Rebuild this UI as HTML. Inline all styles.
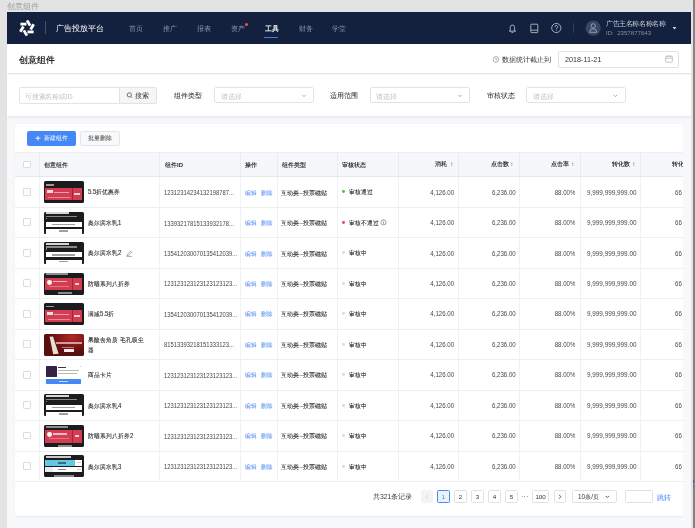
<!DOCTYPE html><html><head><meta charset="utf-8"><style>
*{box-sizing:border-box;margin:0;padding:0}
body{width:695px;height:528px;overflow:hidden;background:#e3e3e3;position:relative;font-family:"Liberation Sans",sans-serif;color:#333}
.ab{position:absolute}
.t{position:absolute;white-space:nowrap;line-height:1;transform:scale(0.1);transform-origin:0 0;will-change:transform}
svg{position:absolute;overflow:visible;left:0;top:0}
</style></head><body>
<div class="t" style="left:7.00px;top:1.50px;font-size:80.0px;color:#a0a0a0;font-weight:normal;">创意组件</div>
<div class="ab" style="left:692.80px;top:0.00px;width:2.20px;height:528.00px;background:#848484"></div>
<div class="ab" style="left:7.00px;top:12.00px;width:684.00px;height:516.00px;background:#f7f8fa"></div>
<div class="ab" style="left:7.00px;top:12.00px;width:684.00px;height:31.60px;background:#13213f"></div>
<svg style="left:27.3px;top:28.4px" width="1" height="1"><rect x="-6.6" y="-5.3" width="6.1" height="2.8" transform="rotate(0)" fill="#fff"/><rect x="-6.6" y="-5.3" width="6.1" height="2.8" transform="rotate(60)" fill="#fff"/><rect x="-6.6" y="-5.3" width="6.1" height="2.8" transform="rotate(120)" fill="#fff"/><rect x="-6.6" y="-5.3" width="6.1" height="2.8" transform="rotate(180)" fill="#fff"/><rect x="-6.6" y="-5.3" width="6.1" height="2.8" transform="rotate(240)" fill="#fff"/><rect x="-6.6" y="-5.3" width="6.1" height="2.8" transform="rotate(300)" fill="#fff"/></svg>
<div class="ab" style="left:45.20px;top:21.00px;width:0.60px;height:13.00px;background:rgba(255,255,255,0.22)"></div>
<div class="t" style="left:55.50px;top:24.00px;font-size:80.0px;color:#ffffff;font-weight:500;">广告投放平台</div>
<div class="t" style="left:128.60px;top:25.00px;font-size:67.0px;color:#8a93a6;font-weight:normal;">首页</div>
<div class="t" style="left:163.20px;top:25.00px;font-size:67.0px;color:#8a93a6;font-weight:normal;">推广</div>
<div class="t" style="left:197.00px;top:25.00px;font-size:67.0px;color:#8a93a6;font-weight:normal;">报表</div>
<div class="t" style="left:230.70px;top:25.00px;font-size:67.0px;color:#8a93a6;font-weight:normal;">资产</div>
<div class="t" style="left:264.60px;top:25.00px;font-size:66.0px;color:#ffffff;font-weight:bold;">工具</div>
<div class="t" style="left:298.50px;top:25.00px;font-size:67.0px;color:#8a93a6;font-weight:normal;">财务</div>
<div class="t" style="left:332.40px;top:25.00px;font-size:67.0px;color:#8a93a6;font-weight:normal;">学堂</div>
<div class="ab" style="left:264.00px;top:36.50px;width:14.00px;height:1.80px;background:#3b7ff3;border-radius:1px"></div>
<div class="ab" style="left:244.70px;top:23.10px;width:3.40px;height:3.40px;background:#f0574c;border-radius:50%"></div>
<svg style="left:0px;top:0px" width="695" height="528"><g fill="none" stroke="#c5cad4" stroke-width="0.8">
<path d="M509 31.2 h7 M510.2 31.2 v-3.6 a2.2 2.6 0 0 1 4.4 0 v3.6 M511.4 32.4 h2"/>
<rect x="530.8" y="24.2" width="7" height="8.4" rx="0.8"/>
<path d="M530.8 30.2 h7"/>
<circle cx="556.3" cy="28" r="4.6"/>
<path d="M554.9 26.9 a1.4 1.4 0 1 1 1.9 1.3 c-0.4 0.2 -0.5 0.4 -0.5 0.9 v0.4"/>
</g>
<circle cx="556.3" cy="30.8" r="0.45" fill="#c5cad4"/>
<rect x="573.1" y="23" width="0.6" height="10" fill="rgba(255,255,255,0.22)"/>
<circle cx="593.2" cy="28.2" r="7.6" fill="#3a4661"/>
<g fill="none" stroke="#c3c8d1" stroke-width="0.65">
<circle cx="593.2" cy="25.9" r="2.2"/>
<path d="M589.6 32.3 a3.6 3.5 0 0 1 7.2 0 z"/>
</g>
<path d="M672.6 27.0 h3.8 l-1.9 2.6 z" fill="#d5d9e0"/></svg>
<div class="t" style="left:606.00px;top:19.60px;font-size:66.0px;color:#c9cdd5;font-weight:normal;">广告主名称名称名称</div>
<div class="t" style="left:606.00px;top:30.20px;font-size:61.0px;color:#858ea2;font-weight:normal;">ID:&nbsp;&nbsp;2357877643</div>
<div class="ab" style="left:7.00px;top:43.60px;width:684.00px;height:30.40px;background:#fff;border-bottom:0.8px solid #e6e7ea"></div>
<div class="t" style="left:18.90px;top:54.60px;font-size:89.0px;color:#222;font-weight:bold;">创意组件</div>
<svg style="left:0px;top:0px" width="695" height="528"><g fill="none" stroke="#8a8a8a" stroke-width="0.7">
<circle cx="495.9" cy="59.4" r="2.8"/>
<path d="M495.9 57.9 v1.7 h1.1"/>
</g></svg>
<div class="t" style="left:501.70px;top:55.60px;font-size:70.0px;color:#333;font-weight:normal;">数据统计截止到</div>
<div class="ab" style="left:558.30px;top:50.50px;width:120.30px;height:17.00px;background:#fff;border:0.7px solid #dfe1e5;border-radius:2px"></div>
<div class="t" style="left:565.10px;top:55.80px;font-size:76.0px;color:#333;font-weight:normal;transform:scale(0.0950,0.1);">2018-11-21</div>
<svg style="left:0px;top:0px" width="695" height="528"><g fill="none" stroke="#aaa" stroke-width="0.7">
<rect x="665.7" y="56.2" width="6.6" height="6" rx="0.6"/>
<path d="M665.7 58.2 h6.6 M667.6 55.4 v1.6 M670.4 55.4 v1.6"/>
</g></svg>
<div class="ab" style="left:7.00px;top:74.60px;width:684.00px;height:41.20px;background:#fff;box-shadow:0 1.5px 2px rgba(30,40,90,0.06)"></div>
<div class="ab" style="left:18.90px;top:87.30px;width:101.00px;height:16.70px;background:#fff;border:0.7px solid #e1e3e7;border-radius:2px 0 0 2px"></div>
<div class="t" style="left:25.30px;top:92.80px;font-size:68.0px;color:#bfc2c7;font-weight:normal;">可搜索名称或ID</div>
<div class="ab" style="left:118.90px;top:87.30px;width:38.60px;height:16.70px;background:#f5f6f8;border:0.7px solid #e1e3e7;border-radius:0 2px 2px 0"></div>
<svg style="left:0px;top:0px" width="695" height="528"><g fill="none" stroke="#444" stroke-width="0.75">
<circle cx="129.3" cy="94.9" r="2.1"/>
<path d="M130.8 96.4 l1.3 1.3"/>
</g></svg>
<div class="t" style="left:134.60px;top:92.20px;font-size:73.0px;color:#333;font-weight:normal;">搜索</div>
<div class="t" style="left:173.90px;top:92.00px;font-size:70.0px;color:#1f1f1f;font-weight:normal;">组件类型</div>
<div class="ab" style="left:214.00px;top:87.20px;width:99.70px;height:16.30px;background:#fff;border:0.7px solid #e1e3e7;border-radius:2px"></div>
<div class="t" style="left:220.50px;top:92.60px;font-size:68.0px;color:#bfc2c7;font-weight:normal;">请选择</div>
<svg style="left:0px;top:0px" width="695" height="528"><path d="M302.3 94.9 l1.7 1.7 l1.7 -1.7" fill="none" stroke="#888" stroke-width="0.7"/></svg>
<div class="t" style="left:330.40px;top:92.00px;font-size:70.0px;color:#1f1f1f;font-weight:normal;">适用范围</div>
<div class="ab" style="left:369.60px;top:87.20px;width:100.30px;height:16.30px;background:#fff;border:0.7px solid #e1e3e7;border-radius:2px"></div>
<div class="t" style="left:376.10px;top:92.60px;font-size:68.0px;color:#bfc2c7;font-weight:normal;">请选择</div>
<svg style="left:0px;top:0px" width="695" height="528"><path d="M458.3 94.9 l1.7 1.7 l1.7 -1.7" fill="none" stroke="#888" stroke-width="0.7"/></svg>
<div class="t" style="left:486.80px;top:92.00px;font-size:70.0px;color:#1f1f1f;font-weight:normal;">审核状态</div>
<div class="ab" style="left:526.30px;top:87.20px;width:99.70px;height:16.30px;background:#fff;border:0.7px solid #e1e3e7;border-radius:2px"></div>
<div class="t" style="left:532.80px;top:92.60px;font-size:68.0px;color:#bfc2c7;font-weight:normal;">请选择</div>
<svg style="left:0px;top:0px" width="695" height="528"><path d="M613.6999999999999 94.9 l1.7 1.7 l1.7 -1.7" fill="none" stroke="#888" stroke-width="0.7"/></svg>
<div class="ab" style="left:15.00px;top:124.00px;width:668.00px;height:392.20px;background:#fff;border-radius:2px;box-shadow:0 0.5px 2px rgba(0,0,0,0.06)"></div>
<div class="ab" style="left:26.90px;top:131.00px;width:49.00px;height:14.60px;background:#4487f6;border-radius:2px"></div>
<svg style="left:0px;top:0px" width="695" height="528"><path d="M35.6 138.2 h4.7 M37.95 135.85 v4.7" stroke="#fff" stroke-width="0.9"/></svg>
<div class="t" style="left:43.90px;top:134.90px;font-size:61.0px;color:#fff;font-weight:normal;">新建组件</div>
<div class="ab" style="left:80.20px;top:131.00px;width:39.60px;height:14.60px;background:#f8f9fa;border:0.7px solid #e4e6ea;border-radius:2px"></div>
<div class="t" style="left:88.10px;top:134.90px;font-size:61.0px;color:#333;font-weight:normal;">批量删除</div>
<div class="ab" style="left:15.00px;top:152.20px;width:668.00px;height:24.40px;background:#f5f7fa;border-top:0.6px solid #eceef2"></div>
<div class="ab" style="left:15.00px;top:176.20px;width:668.00px;height:0.80px;background:#e6e9ee"></div>
<div class="ab" style="left:39.05px;top:152.20px;width:0.70px;height:24.20px;background:#e9ebef"></div>
<div class="ab" style="left:159.45px;top:152.20px;width:0.70px;height:24.20px;background:#e9ebef"></div>
<div class="ab" style="left:240.05px;top:152.20px;width:0.70px;height:24.20px;background:#e9ebef"></div>
<div class="ab" style="left:276.65px;top:152.20px;width:0.70px;height:24.20px;background:#e9ebef"></div>
<div class="ab" style="left:337.25px;top:152.20px;width:0.70px;height:24.20px;background:#e9ebef"></div>
<div class="ab" style="left:398.05px;top:152.20px;width:0.70px;height:24.20px;background:#e9ebef"></div>
<div class="ab" style="left:458.25px;top:152.20px;width:0.70px;height:24.20px;background:#e9ebef"></div>
<div class="ab" style="left:519.05px;top:152.20px;width:0.70px;height:24.20px;background:#e9ebef"></div>
<div class="ab" style="left:579.55px;top:152.20px;width:0.70px;height:24.20px;background:#e9ebef"></div>
<div class="ab" style="left:640.15px;top:152.20px;width:0.70px;height:24.20px;background:#e9ebef"></div>
<div class="ab" style="left:23.20px;top:160.60px;width:7.80px;height:7.80px;background:#fff;border:0.7px solid #d9dce1;border-radius:1px"></div>
<div class="t" style="left:43.80px;top:161.60px;font-size:60.0px;color:#2a2a2a;font-weight:bold;">创意组件</div>
<div class="t" style="left:164.80px;top:161.60px;font-size:60.0px;color:#2a2a2a;font-weight:bold;">组件ID</div>
<div class="t" style="left:244.90px;top:161.60px;font-size:60.0px;color:#2a2a2a;font-weight:bold;">操作</div>
<div class="t" style="left:281.70px;top:161.60px;font-size:60.0px;color:#2a2a2a;font-weight:bold;">组件类型</div>
<div class="t" style="left:342.30px;top:161.80px;font-size:60.0px;color:#2a2a2a;font-weight:bold;">审核状态</div>
<div class="t" style="left:398.40px;top:160.60px;font-size:60.0px;color:#2a2a2a;font-weight:bold;width:494.0px;text-align:right;">消耗</div>
<svg style="left:450.6px;top:161.6px" width="2" height="5"><path d="M0 1.9 L0.8 0.3 L1.6 1.9 z M0 2.7 L0.8 4.3 L1.6 2.7 z" fill="#8e939b"/></svg>
<div class="t" style="left:458.60px;top:160.60px;font-size:60.0px;color:#2a2a2a;font-weight:bold;width:500.0px;text-align:right;">点击数</div>
<svg style="left:511.4px;top:161.6px" width="2" height="5"><path d="M0 1.9 L0.8 0.3 L1.6 1.9 z M0 2.7 L0.8 4.3 L1.6 2.7 z" fill="#8e939b"/></svg>
<div class="t" style="left:519.40px;top:160.60px;font-size:60.0px;color:#2a2a2a;font-weight:bold;width:497.0px;text-align:right;">点击率</div>
<svg style="left:571.9px;top:161.6px" width="2" height="5"><path d="M0 1.9 L0.8 0.3 L1.6 1.9 z M0 2.7 L0.8 4.3 L1.6 2.7 z" fill="#8e939b"/></svg>
<div class="t" style="left:579.90px;top:160.60px;font-size:60.0px;color:#2a2a2a;font-weight:bold;width:498.0px;text-align:right;">转化数</div>
<svg style="left:632.5px;top:161.6px" width="2" height="5"><path d="M0 1.9 L0.8 0.3 L1.6 1.9 z M0 2.7 L0.8 4.3 L1.6 2.7 z" fill="#8e939b"/></svg>
<div class="t" style="left:671.60px;top:160.60px;font-size:60.0px;color:#2a2a2a;font-weight:bold;">转化</div>
<div class="ab" style="left:15.00px;top:206.68px;width:668.00px;height:0.80px;background:#eceef1"></div>
<div class="ab" style="left:39.05px;top:176.60px;width:0.70px;height:30.48px;background:#eff1f4"></div>
<div class="ab" style="left:159.45px;top:176.60px;width:0.70px;height:30.48px;background:#eff1f4"></div>
<div class="ab" style="left:240.05px;top:176.60px;width:0.70px;height:30.48px;background:#eff1f4"></div>
<div class="ab" style="left:276.65px;top:176.60px;width:0.70px;height:30.48px;background:#eff1f4"></div>
<div class="ab" style="left:337.25px;top:176.60px;width:0.70px;height:30.48px;background:#eff1f4"></div>
<div class="ab" style="left:398.05px;top:176.60px;width:0.70px;height:30.48px;background:#eff1f4"></div>
<div class="ab" style="left:458.25px;top:176.60px;width:0.70px;height:30.48px;background:#eff1f4"></div>
<div class="ab" style="left:519.05px;top:176.60px;width:0.70px;height:30.48px;background:#eff1f4"></div>
<div class="ab" style="left:579.55px;top:176.60px;width:0.70px;height:30.48px;background:#eff1f4"></div>
<div class="ab" style="left:640.15px;top:176.60px;width:0.70px;height:30.48px;background:#eff1f4"></div>
<div class="ab" style="left:23.20px;top:187.84px;width:7.80px;height:7.80px;background:#fff;border:0.7px solid #d9dce1;border-radius:1px"></div>
<div class="ab" style="left:43.60px;top:181.10px;width:40.00px;height:21.60px;background:#1c1c1e;border-radius:1.6px"></div>
<div class="ab" style="left:45.90px;top:184.00px;width:8.40px;height:1.50px;background:#9a9a9a"></div>
<div class="ab" style="left:45.20px;top:187.70px;width:36.90px;height:12.30px;background:#d43c51"></div>
<div class="ab" style="left:72.00px;top:187.70px;width:0.50px;height:12.30px;background:#9a2a3a"></div>
<div class="ab" style="left:47.20px;top:190.10px;width:5.80px;height:2.90px;background:#f6dfe3"></div>
<div class="ab" style="left:53.60px;top:191.70px;width:15.60px;height:1.20px;background:#eaa0ab"></div>
<div class="ab" style="left:47.50px;top:197.20px;width:22.30px;height:0.70px;background:#e68a98"></div>
<div class="ab" style="left:74.30px;top:193.10px;width:5.50px;height:1.60px;background:#f3cdd3"></div>
<div class="t" style="left:87.90px;top:189.34px;font-size:64.0px;color:#2b2b2b;font-weight:normal;transform:scale(0.0940,0.1);-webkit-text-stroke:1.0px #2b2b2b;">5.5折优惠券</div>
<div class="t" style="left:164.00px;top:189.04px;font-size:65.0px;color:#474747;font-weight:normal;transform:scale(0.0900,0.1);">12312314234132198787...</div>
<div class="t" style="left:244.80px;top:189.54px;font-size:63.0px;color:#3f80f2;font-weight:normal;transform:scale(0.0940,0.1);">编辑</div>
<div class="t" style="left:261.00px;top:189.54px;font-size:63.0px;color:#3f80f2;font-weight:normal;transform:scale(0.0940,0.1);">删除</div>
<div class="t" style="left:281.40px;top:189.54px;font-size:62.0px;color:#2b2b2b;font-weight:normal;transform:scale(0.0990,0.1);-webkit-text-stroke:0.8px #2b2b2b;">互动类–投票磁贴</div>
<div class="ab" style="left:342.40px;top:190.44px;width:2.80px;height:2.80px;background:#5cbf3a;border-radius:50%"></div>
<div class="t" style="left:348.50px;top:189.44px;font-size:64.0px;color:#2b2b2b;font-weight:normal;transform:scale(0.0950,0.1);-webkit-text-stroke:0.8px #2b2b2b;">审核通过</div>
<div class="t" style="left:398.40px;top:188.54px;font-size:67.0px;color:#474747;font-weight:normal;width:616.5px;text-align:right;transform:scale(0.0910,0.1);">4,126.00</div>
<div class="t" style="left:458.60px;top:188.54px;font-size:67.0px;color:#474747;font-weight:normal;width:623.1px;text-align:right;transform:scale(0.0910,0.1);">6,236.00</div>
<div class="t" style="left:519.40px;top:188.54px;font-size:67.0px;color:#474747;font-weight:normal;width:619.8px;text-align:right;transform:scale(0.0910,0.1);">88.00%</div>
<div class="t" style="left:579.90px;top:188.54px;font-size:67.0px;color:#474747;font-weight:normal;width:594.7px;text-align:right;transform:scale(0.0950,0.1);">9,999,999,999.00</div>
<div class="t" style="left:674.90px;top:188.54px;font-size:67.0px;color:#474747;font-weight:normal;transform:scale(0.0910,0.1);">66</div>
<div class="ab" style="left:15.00px;top:237.16px;width:668.00px;height:0.80px;background:#eceef1"></div>
<div class="ab" style="left:39.05px;top:207.08px;width:0.70px;height:30.48px;background:#eff1f4"></div>
<div class="ab" style="left:159.45px;top:207.08px;width:0.70px;height:30.48px;background:#eff1f4"></div>
<div class="ab" style="left:240.05px;top:207.08px;width:0.70px;height:30.48px;background:#eff1f4"></div>
<div class="ab" style="left:276.65px;top:207.08px;width:0.70px;height:30.48px;background:#eff1f4"></div>
<div class="ab" style="left:337.25px;top:207.08px;width:0.70px;height:30.48px;background:#eff1f4"></div>
<div class="ab" style="left:398.05px;top:207.08px;width:0.70px;height:30.48px;background:#eff1f4"></div>
<div class="ab" style="left:458.25px;top:207.08px;width:0.70px;height:30.48px;background:#eff1f4"></div>
<div class="ab" style="left:519.05px;top:207.08px;width:0.70px;height:30.48px;background:#eff1f4"></div>
<div class="ab" style="left:579.55px;top:207.08px;width:0.70px;height:30.48px;background:#eff1f4"></div>
<div class="ab" style="left:640.15px;top:207.08px;width:0.70px;height:30.48px;background:#eff1f4"></div>
<div class="ab" style="left:23.20px;top:218.32px;width:7.80px;height:7.80px;background:#fff;border:0.7px solid #d9dce1;border-radius:1px"></div>
<div class="ab" style="left:43.80px;top:211.58px;width:40.10px;height:22.00px;background:#1f1d1c;border-radius:1.6px 1.6px 1px 1px"></div>
<div class="ab" style="left:46.10px;top:212.28px;width:23.00px;height:1.80px;background:#d6d6d6"></div>
<div class="ab" style="left:46.10px;top:215.88px;width:31.40px;height:1.30px;background:#8a8a8a"></div>
<div class="ab" style="left:46.10px;top:217.98px;width:1.40px;height:1.30px;background:#8a8a8a"></div>
<div class="ab" style="left:45.70px;top:221.98px;width:36.60px;height:5.00px;background:#fff"></div>
<div class="ab" style="left:51.60px;top:223.88px;width:23.30px;height:1.30px;background:#a0a0a0"></div>
<div class="ab" style="left:46.10px;top:229.08px;width:36.20px;height:4.50px;background:#fff"></div>
<div class="ab" style="left:59.30px;top:230.38px;width:8.50px;height:1.30px;background:#a0a0a0"></div>
<div class="t" style="left:87.90px;top:219.82px;font-size:64.0px;color:#2b2b2b;font-weight:normal;transform:scale(0.0940,0.1);-webkit-text-stroke:1.0px #2b2b2b;">奥尔滨水乳1</div>
<div class="t" style="left:164.00px;top:219.52px;font-size:65.0px;color:#474747;font-weight:normal;transform:scale(0.0900,0.1);">13393217815133932178...</div>
<div class="t" style="left:244.80px;top:220.02px;font-size:63.0px;color:#3f80f2;font-weight:normal;transform:scale(0.0940,0.1);">编辑</div>
<div class="t" style="left:261.00px;top:220.02px;font-size:63.0px;color:#3f80f2;font-weight:normal;transform:scale(0.0940,0.1);">删除</div>
<div class="t" style="left:281.40px;top:220.02px;font-size:62.0px;color:#2b2b2b;font-weight:normal;transform:scale(0.0990,0.1);-webkit-text-stroke:0.8px #2b2b2b;">互动类–投票磁贴</div>
<div class="ab" style="left:342.40px;top:220.92px;width:2.80px;height:2.80px;background:#ea4b5b;border-radius:50%"></div>
<div class="t" style="left:348.50px;top:219.92px;font-size:64.0px;color:#2b2b2b;font-weight:normal;transform:scale(0.0950,0.1);-webkit-text-stroke:0.8px #2b2b2b;">审核不通过</div>
<svg style="left:0px;top:0px" width="695" height="528"><circle cx="383.5" cy="222.32" r="2.6" fill="none" stroke="#666" stroke-width="0.65"/><path d="M383.5 221.82 v2" stroke="#666" stroke-width="0.65"/><circle cx="383.5" cy="220.92" r="0.4" fill="#666"/></svg>
<div class="t" style="left:398.40px;top:219.02px;font-size:67.0px;color:#474747;font-weight:normal;width:616.5px;text-align:right;transform:scale(0.0910,0.1);">4,126.00</div>
<div class="t" style="left:458.60px;top:219.02px;font-size:67.0px;color:#474747;font-weight:normal;width:623.1px;text-align:right;transform:scale(0.0910,0.1);">6,236.00</div>
<div class="t" style="left:519.40px;top:219.02px;font-size:67.0px;color:#474747;font-weight:normal;width:619.8px;text-align:right;transform:scale(0.0910,0.1);">88.00%</div>
<div class="t" style="left:579.90px;top:219.02px;font-size:67.0px;color:#474747;font-weight:normal;width:594.7px;text-align:right;transform:scale(0.0950,0.1);">9,999,999,999.00</div>
<div class="t" style="left:674.90px;top:219.02px;font-size:67.0px;color:#474747;font-weight:normal;transform:scale(0.0910,0.1);">66</div>
<div class="ab" style="left:15.00px;top:267.64px;width:668.00px;height:0.80px;background:#eceef1"></div>
<div class="ab" style="left:39.05px;top:237.56px;width:0.70px;height:30.48px;background:#eff1f4"></div>
<div class="ab" style="left:159.45px;top:237.56px;width:0.70px;height:30.48px;background:#eff1f4"></div>
<div class="ab" style="left:240.05px;top:237.56px;width:0.70px;height:30.48px;background:#eff1f4"></div>
<div class="ab" style="left:276.65px;top:237.56px;width:0.70px;height:30.48px;background:#eff1f4"></div>
<div class="ab" style="left:337.25px;top:237.56px;width:0.70px;height:30.48px;background:#eff1f4"></div>
<div class="ab" style="left:398.05px;top:237.56px;width:0.70px;height:30.48px;background:#eff1f4"></div>
<div class="ab" style="left:458.25px;top:237.56px;width:0.70px;height:30.48px;background:#eff1f4"></div>
<div class="ab" style="left:519.05px;top:237.56px;width:0.70px;height:30.48px;background:#eff1f4"></div>
<div class="ab" style="left:579.55px;top:237.56px;width:0.70px;height:30.48px;background:#eff1f4"></div>
<div class="ab" style="left:640.15px;top:237.56px;width:0.70px;height:30.48px;background:#eff1f4"></div>
<div class="ab" style="left:23.20px;top:248.80px;width:7.80px;height:7.80px;background:#fff;border:0.7px solid #d9dce1;border-radius:1px"></div>
<div class="ab" style="left:43.80px;top:242.06px;width:40.10px;height:22.00px;background:#1f1d1c;border-radius:1.6px 1.6px 1px 1px"></div>
<div class="ab" style="left:46.10px;top:242.76px;width:23.00px;height:1.80px;background:#d6d6d6"></div>
<div class="ab" style="left:46.10px;top:246.36px;width:31.40px;height:1.30px;background:#8a8a8a"></div>
<div class="ab" style="left:46.10px;top:248.46px;width:1.40px;height:1.30px;background:#8a8a8a"></div>
<div class="ab" style="left:45.70px;top:252.46px;width:36.60px;height:5.00px;background:#fff"></div>
<div class="ab" style="left:51.60px;top:254.36px;width:23.30px;height:1.30px;background:#a0a0a0"></div>
<div class="ab" style="left:46.10px;top:259.56px;width:36.20px;height:4.50px;background:#fff"></div>
<div class="ab" style="left:59.30px;top:260.86px;width:8.50px;height:1.30px;background:#a0a0a0"></div>
<div class="t" style="left:87.90px;top:250.30px;font-size:64.0px;color:#2b2b2b;font-weight:normal;transform:scale(0.0940,0.1);-webkit-text-stroke:1.0px #2b2b2b;">奥尔滨水乳2</div>
<svg style="left:0px;top:0px" width="695" height="528"><path d="M127 255.8 l0.4 -1.5 l3.2 -3.2 l1.1 1.1 l-3.2 3.2 z M126.6 256.40000000000003 h5.6" fill="none" stroke="#777" stroke-width="0.6"/></svg>
<div class="t" style="left:164.00px;top:250.00px;font-size:65.0px;color:#474747;font-weight:normal;transform:scale(0.0900,0.1);">13541203007013541203​9...</div>
<div class="t" style="left:244.80px;top:250.50px;font-size:63.0px;color:#3f80f2;font-weight:normal;transform:scale(0.0940,0.1);">编辑</div>
<div class="t" style="left:261.00px;top:250.50px;font-size:63.0px;color:#3f80f2;font-weight:normal;transform:scale(0.0940,0.1);">删除</div>
<div class="t" style="left:281.40px;top:250.50px;font-size:62.0px;color:#2b2b2b;font-weight:normal;transform:scale(0.0990,0.1);-webkit-text-stroke:0.8px #2b2b2b;">互动类–投票磁贴</div>
<div class="ab" style="left:342.40px;top:251.40px;width:2.80px;height:2.80px;background:#dcdcdc;border-radius:50%"></div>
<div class="t" style="left:348.50px;top:250.40px;font-size:64.0px;color:#2b2b2b;font-weight:normal;transform:scale(0.0950,0.1);-webkit-text-stroke:0.8px #2b2b2b;">审核中</div>
<div class="t" style="left:398.40px;top:249.50px;font-size:67.0px;color:#474747;font-weight:normal;width:616.5px;text-align:right;transform:scale(0.0910,0.1);">4,126.00</div>
<div class="t" style="left:458.60px;top:249.50px;font-size:67.0px;color:#474747;font-weight:normal;width:623.1px;text-align:right;transform:scale(0.0910,0.1);">6,236.00</div>
<div class="t" style="left:519.40px;top:249.50px;font-size:67.0px;color:#474747;font-weight:normal;width:619.8px;text-align:right;transform:scale(0.0910,0.1);">88.00%</div>
<div class="t" style="left:579.90px;top:249.50px;font-size:67.0px;color:#474747;font-weight:normal;width:594.7px;text-align:right;transform:scale(0.0950,0.1);">9,999,999,999.00</div>
<div class="t" style="left:674.90px;top:249.50px;font-size:67.0px;color:#474747;font-weight:normal;transform:scale(0.0910,0.1);">66</div>
<div class="ab" style="left:15.00px;top:298.12px;width:668.00px;height:0.80px;background:#eceef1"></div>
<div class="ab" style="left:39.05px;top:268.04px;width:0.70px;height:30.48px;background:#eff1f4"></div>
<div class="ab" style="left:159.45px;top:268.04px;width:0.70px;height:30.48px;background:#eff1f4"></div>
<div class="ab" style="left:240.05px;top:268.04px;width:0.70px;height:30.48px;background:#eff1f4"></div>
<div class="ab" style="left:276.65px;top:268.04px;width:0.70px;height:30.48px;background:#eff1f4"></div>
<div class="ab" style="left:337.25px;top:268.04px;width:0.70px;height:30.48px;background:#eff1f4"></div>
<div class="ab" style="left:398.05px;top:268.04px;width:0.70px;height:30.48px;background:#eff1f4"></div>
<div class="ab" style="left:458.25px;top:268.04px;width:0.70px;height:30.48px;background:#eff1f4"></div>
<div class="ab" style="left:519.05px;top:268.04px;width:0.70px;height:30.48px;background:#eff1f4"></div>
<div class="ab" style="left:579.55px;top:268.04px;width:0.70px;height:30.48px;background:#eff1f4"></div>
<div class="ab" style="left:640.15px;top:268.04px;width:0.70px;height:30.48px;background:#eff1f4"></div>
<div class="ab" style="left:23.20px;top:279.28px;width:7.80px;height:7.80px;background:#fff;border:0.7px solid #d9dce1;border-radius:1px"></div>
<div class="ab" style="left:43.60px;top:272.54px;width:40.00px;height:22.00px;background:#1c1c1e;border-radius:1.6px"></div>
<div class="ab" style="left:45.90px;top:273.34px;width:21.70px;height:1.80px;background:#8f8f8f"></div>
<div class="ab" style="left:45.20px;top:277.84px;width:36.90px;height:12.60px;background:#d43c51"></div>
<div class="ab" style="left:72.00px;top:277.84px;width:0.50px;height:12.60px;background:#9a2a3a"></div>
<div class="ab" style="left:47.40px;top:279.74px;width:4.50px;height:4.80px;background:#f2f2f2;border-radius:50%"></div>
<div class="ab" style="left:53.20px;top:281.04px;width:13.90px;height:1.30px;background:#f0b8c0"></div>
<div class="ab" style="left:49.10px;top:285.54px;width:20.40px;height:1.30px;background:#e07686"></div>
<div class="ab" style="left:74.60px;top:282.94px;width:4.20px;height:2.00px;background:#f3cdd3"></div>
<div class="ab" style="left:58.30px;top:292.34px;width:13.30px;height:1.90px;background:#8a8a8a"></div>
<div class="t" style="left:87.90px;top:280.78px;font-size:64.0px;color:#2b2b2b;font-weight:normal;transform:scale(0.0940,0.1);-webkit-text-stroke:1.0px #2b2b2b;">防晒系列八折券</div>
<div class="t" style="left:164.00px;top:280.48px;font-size:65.0px;color:#474747;font-weight:normal;transform:scale(0.0900,0.1);">12312312312312312312​3...</div>
<div class="t" style="left:244.80px;top:280.98px;font-size:63.0px;color:#3f80f2;font-weight:normal;transform:scale(0.0940,0.1);">编辑</div>
<div class="t" style="left:261.00px;top:280.98px;font-size:63.0px;color:#3f80f2;font-weight:normal;transform:scale(0.0940,0.1);">删除</div>
<div class="t" style="left:281.40px;top:280.98px;font-size:62.0px;color:#2b2b2b;font-weight:normal;transform:scale(0.0990,0.1);-webkit-text-stroke:0.8px #2b2b2b;">互动类–投票磁贴</div>
<div class="ab" style="left:342.40px;top:281.88px;width:2.80px;height:2.80px;background:#dcdcdc;border-radius:50%"></div>
<div class="t" style="left:348.50px;top:280.88px;font-size:64.0px;color:#2b2b2b;font-weight:normal;transform:scale(0.0950,0.1);-webkit-text-stroke:0.8px #2b2b2b;">审核中</div>
<div class="t" style="left:398.40px;top:279.98px;font-size:67.0px;color:#474747;font-weight:normal;width:616.5px;text-align:right;transform:scale(0.0910,0.1);">4,126.00</div>
<div class="t" style="left:458.60px;top:279.98px;font-size:67.0px;color:#474747;font-weight:normal;width:623.1px;text-align:right;transform:scale(0.0910,0.1);">6,236.00</div>
<div class="t" style="left:519.40px;top:279.98px;font-size:67.0px;color:#474747;font-weight:normal;width:619.8px;text-align:right;transform:scale(0.0910,0.1);">88.00%</div>
<div class="t" style="left:579.90px;top:279.98px;font-size:67.0px;color:#474747;font-weight:normal;width:594.7px;text-align:right;transform:scale(0.0950,0.1);">9,999,999,999.00</div>
<div class="t" style="left:674.90px;top:279.98px;font-size:67.0px;color:#474747;font-weight:normal;transform:scale(0.0910,0.1);">66</div>
<div class="ab" style="left:15.00px;top:328.60px;width:668.00px;height:0.80px;background:#eceef1"></div>
<div class="ab" style="left:39.05px;top:298.52px;width:0.70px;height:30.48px;background:#eff1f4"></div>
<div class="ab" style="left:159.45px;top:298.52px;width:0.70px;height:30.48px;background:#eff1f4"></div>
<div class="ab" style="left:240.05px;top:298.52px;width:0.70px;height:30.48px;background:#eff1f4"></div>
<div class="ab" style="left:276.65px;top:298.52px;width:0.70px;height:30.48px;background:#eff1f4"></div>
<div class="ab" style="left:337.25px;top:298.52px;width:0.70px;height:30.48px;background:#eff1f4"></div>
<div class="ab" style="left:398.05px;top:298.52px;width:0.70px;height:30.48px;background:#eff1f4"></div>
<div class="ab" style="left:458.25px;top:298.52px;width:0.70px;height:30.48px;background:#eff1f4"></div>
<div class="ab" style="left:519.05px;top:298.52px;width:0.70px;height:30.48px;background:#eff1f4"></div>
<div class="ab" style="left:579.55px;top:298.52px;width:0.70px;height:30.48px;background:#eff1f4"></div>
<div class="ab" style="left:640.15px;top:298.52px;width:0.70px;height:30.48px;background:#eff1f4"></div>
<div class="ab" style="left:23.20px;top:309.76px;width:7.80px;height:7.80px;background:#fff;border:0.7px solid #d9dce1;border-radius:1px"></div>
<div class="ab" style="left:43.60px;top:303.02px;width:40.00px;height:21.60px;background:#1c1c1e;border-radius:1.6px"></div>
<div class="ab" style="left:45.90px;top:305.92px;width:8.40px;height:1.50px;background:#9a9a9a"></div>
<div class="ab" style="left:45.20px;top:309.62px;width:36.90px;height:12.30px;background:#d43c51"></div>
<div class="ab" style="left:72.00px;top:309.62px;width:0.50px;height:12.30px;background:#9a2a3a"></div>
<div class="ab" style="left:47.20px;top:312.02px;width:5.80px;height:2.90px;background:#f6dfe3"></div>
<div class="ab" style="left:53.60px;top:313.62px;width:15.60px;height:1.20px;background:#eaa0ab"></div>
<div class="ab" style="left:47.50px;top:319.12px;width:22.30px;height:0.70px;background:#e68a98"></div>
<div class="ab" style="left:74.30px;top:315.02px;width:5.50px;height:1.60px;background:#f3cdd3"></div>
<div class="t" style="left:87.90px;top:311.26px;font-size:64.0px;color:#2b2b2b;font-weight:normal;transform:scale(0.0940,0.1);-webkit-text-stroke:1.0px #2b2b2b;">满减5.5折</div>
<div class="t" style="left:164.00px;top:310.96px;font-size:65.0px;color:#474747;font-weight:normal;transform:scale(0.0900,0.1);">13541203007013541203​9...</div>
<div class="t" style="left:244.80px;top:311.46px;font-size:63.0px;color:#3f80f2;font-weight:normal;transform:scale(0.0940,0.1);">编辑</div>
<div class="t" style="left:261.00px;top:311.46px;font-size:63.0px;color:#3f80f2;font-weight:normal;transform:scale(0.0940,0.1);">删除</div>
<div class="t" style="left:281.40px;top:311.46px;font-size:62.0px;color:#2b2b2b;font-weight:normal;transform:scale(0.0990,0.1);-webkit-text-stroke:0.8px #2b2b2b;">互动类–投票磁贴</div>
<div class="ab" style="left:342.40px;top:312.36px;width:2.80px;height:2.80px;background:#dcdcdc;border-radius:50%"></div>
<div class="t" style="left:348.50px;top:311.36px;font-size:64.0px;color:#2b2b2b;font-weight:normal;transform:scale(0.0950,0.1);-webkit-text-stroke:0.8px #2b2b2b;">审核中</div>
<div class="t" style="left:398.40px;top:310.46px;font-size:67.0px;color:#474747;font-weight:normal;width:616.5px;text-align:right;transform:scale(0.0910,0.1);">4,126.00</div>
<div class="t" style="left:458.60px;top:310.46px;font-size:67.0px;color:#474747;font-weight:normal;width:623.1px;text-align:right;transform:scale(0.0910,0.1);">6,236.00</div>
<div class="t" style="left:519.40px;top:310.46px;font-size:67.0px;color:#474747;font-weight:normal;width:619.8px;text-align:right;transform:scale(0.0910,0.1);">88.00%</div>
<div class="t" style="left:579.90px;top:310.46px;font-size:67.0px;color:#474747;font-weight:normal;width:594.7px;text-align:right;transform:scale(0.0950,0.1);">9,999,999,999.00</div>
<div class="t" style="left:674.90px;top:310.46px;font-size:67.0px;color:#474747;font-weight:normal;transform:scale(0.0910,0.1);">66</div>
<div class="ab" style="left:15.00px;top:359.08px;width:668.00px;height:0.80px;background:#eceef1"></div>
<div class="ab" style="left:39.05px;top:329.00px;width:0.70px;height:30.48px;background:#eff1f4"></div>
<div class="ab" style="left:159.45px;top:329.00px;width:0.70px;height:30.48px;background:#eff1f4"></div>
<div class="ab" style="left:240.05px;top:329.00px;width:0.70px;height:30.48px;background:#eff1f4"></div>
<div class="ab" style="left:276.65px;top:329.00px;width:0.70px;height:30.48px;background:#eff1f4"></div>
<div class="ab" style="left:337.25px;top:329.00px;width:0.70px;height:30.48px;background:#eff1f4"></div>
<div class="ab" style="left:398.05px;top:329.00px;width:0.70px;height:30.48px;background:#eff1f4"></div>
<div class="ab" style="left:458.25px;top:329.00px;width:0.70px;height:30.48px;background:#eff1f4"></div>
<div class="ab" style="left:519.05px;top:329.00px;width:0.70px;height:30.48px;background:#eff1f4"></div>
<div class="ab" style="left:579.55px;top:329.00px;width:0.70px;height:30.48px;background:#eff1f4"></div>
<div class="ab" style="left:640.15px;top:329.00px;width:0.70px;height:30.48px;background:#eff1f4"></div>
<div class="ab" style="left:23.20px;top:340.24px;width:7.80px;height:7.80px;background:#fff;border:0.7px solid #d9dce1;border-radius:1px"></div>
<div class="ab" style="left:43.60px;top:333.90px;width:40.20px;height:21.70px;background:radial-gradient(ellipse 60% 70% at 70% 15%,#b02a2a,#7e1616 60%,#5a0e0e 100%);border-radius:1.6px"></div>
<svg style="left:43.6px;top:333.5px" width="40" height="22"><path d="M5.6 2.75 L9 2.6 L14.65 19.8 L9.2 20.2 z" fill="#e8e0d4"/></svg>
<div class="ab" style="left:56.40px;top:341.70px;width:25.80px;height:2.60px;background:rgba(235,200,200,0.75)"></div>
<div class="ab" style="left:62.40px;top:346.60px;width:11.90px;height:1.30px;background:rgba(220,170,170,0.7)"></div>
<div class="ab" style="left:63.90px;top:349.40px;width:10.40px;height:2.30px;background:#f4eeee;border-radius:0.5px"></div>
<div class="t" style="left:87.90px;top:334.84px;font-size:64.0px;color:#2b2b2b;font-weight:normal;line-height:100.0px;transform:scale(0.0940,0.1);-webkit-text-stroke:1.0px #2b2b2b;">果酸去角质 毛孔吸尘<br>器</div>
<div class="t" style="left:164.00px;top:341.44px;font-size:65.0px;color:#474747;font-weight:normal;transform:scale(0.0900,0.1);">81513393218151333123​...</div>
<div class="t" style="left:244.80px;top:341.94px;font-size:63.0px;color:#3f80f2;font-weight:normal;transform:scale(0.0940,0.1);">编辑</div>
<div class="t" style="left:261.00px;top:341.94px;font-size:63.0px;color:#3f80f2;font-weight:normal;transform:scale(0.0940,0.1);">删除</div>
<div class="t" style="left:281.40px;top:341.94px;font-size:62.0px;color:#2b2b2b;font-weight:normal;transform:scale(0.0990,0.1);-webkit-text-stroke:0.8px #2b2b2b;">互动类–投票磁贴</div>
<div class="ab" style="left:342.40px;top:342.84px;width:2.80px;height:2.80px;background:#dcdcdc;border-radius:50%"></div>
<div class="t" style="left:348.50px;top:341.84px;font-size:64.0px;color:#2b2b2b;font-weight:normal;transform:scale(0.0950,0.1);-webkit-text-stroke:0.8px #2b2b2b;">审核中</div>
<div class="t" style="left:398.40px;top:340.94px;font-size:67.0px;color:#474747;font-weight:normal;width:616.5px;text-align:right;transform:scale(0.0910,0.1);">4,126.00</div>
<div class="t" style="left:458.60px;top:340.94px;font-size:67.0px;color:#474747;font-weight:normal;width:623.1px;text-align:right;transform:scale(0.0910,0.1);">6,236.00</div>
<div class="t" style="left:519.40px;top:340.94px;font-size:67.0px;color:#474747;font-weight:normal;width:619.8px;text-align:right;transform:scale(0.0910,0.1);">88.00%</div>
<div class="t" style="left:579.90px;top:340.94px;font-size:67.0px;color:#474747;font-weight:normal;width:594.7px;text-align:right;transform:scale(0.0950,0.1);">9,999,999,999.00</div>
<div class="t" style="left:674.90px;top:340.94px;font-size:67.0px;color:#474747;font-weight:normal;transform:scale(0.0910,0.1);">66</div>
<div class="ab" style="left:15.00px;top:389.56px;width:668.00px;height:0.80px;background:#eceef1"></div>
<div class="ab" style="left:39.05px;top:359.48px;width:0.70px;height:30.48px;background:#eff1f4"></div>
<div class="ab" style="left:159.45px;top:359.48px;width:0.70px;height:30.48px;background:#eff1f4"></div>
<div class="ab" style="left:240.05px;top:359.48px;width:0.70px;height:30.48px;background:#eff1f4"></div>
<div class="ab" style="left:276.65px;top:359.48px;width:0.70px;height:30.48px;background:#eff1f4"></div>
<div class="ab" style="left:337.25px;top:359.48px;width:0.70px;height:30.48px;background:#eff1f4"></div>
<div class="ab" style="left:398.05px;top:359.48px;width:0.70px;height:30.48px;background:#eff1f4"></div>
<div class="ab" style="left:458.25px;top:359.48px;width:0.70px;height:30.48px;background:#eff1f4"></div>
<div class="ab" style="left:519.05px;top:359.48px;width:0.70px;height:30.48px;background:#eff1f4"></div>
<div class="ab" style="left:579.55px;top:359.48px;width:0.70px;height:30.48px;background:#eff1f4"></div>
<div class="ab" style="left:640.15px;top:359.48px;width:0.70px;height:30.48px;background:#eff1f4"></div>
<div class="ab" style="left:23.20px;top:370.72px;width:7.80px;height:7.80px;background:#fff;border:0.7px solid #d9dce1;border-radius:1px"></div>
<div class="ab" style="left:46.30px;top:366.08px;width:10.80px;height:10.70px;background:#352046;border-radius:0.4px"></div>
<div class="ab" style="left:58.30px;top:366.58px;width:7.30px;height:1.50px;background:#3a3a3a"></div>
<div class="ab" style="left:58.30px;top:369.78px;width:21.00px;height:1.30px;background:#b8b8b8"></div>
<div class="ab" style="left:58.30px;top:372.68px;width:19.00px;height:1.30px;background:#b8b8b8"></div>
<div class="ab" style="left:80.00px;top:366.18px;width:1.20px;height:1.20px;background:#c8c8c8"></div>
<div class="ab" style="left:46.30px;top:379.38px;width:34.90px;height:4.60px;background:#4589f6;border-radius:0.4px"></div>
<div class="ab" style="left:59.10px;top:381.18px;width:8.50px;height:1.10px;background:#c0d6fb"></div>
<div class="t" style="left:87.90px;top:372.22px;font-size:64.0px;color:#2b2b2b;font-weight:normal;transform:scale(0.0940,0.1);-webkit-text-stroke:1.0px #2b2b2b;">商品卡片</div>
<div class="t" style="left:164.00px;top:371.92px;font-size:65.0px;color:#474747;font-weight:normal;transform:scale(0.0900,0.1);">12312312312312312312​3...</div>
<div class="t" style="left:244.80px;top:372.42px;font-size:63.0px;color:#3f80f2;font-weight:normal;transform:scale(0.0940,0.1);">编辑</div>
<div class="t" style="left:261.00px;top:372.42px;font-size:63.0px;color:#3f80f2;font-weight:normal;transform:scale(0.0940,0.1);">删除</div>
<div class="t" style="left:281.40px;top:372.42px;font-size:62.0px;color:#2b2b2b;font-weight:normal;transform:scale(0.0990,0.1);-webkit-text-stroke:0.8px #2b2b2b;">互动类–投票磁贴</div>
<div class="ab" style="left:342.40px;top:373.32px;width:2.80px;height:2.80px;background:#dcdcdc;border-radius:50%"></div>
<div class="t" style="left:348.50px;top:372.32px;font-size:64.0px;color:#2b2b2b;font-weight:normal;transform:scale(0.0950,0.1);-webkit-text-stroke:0.8px #2b2b2b;">审核中</div>
<div class="t" style="left:398.40px;top:371.42px;font-size:67.0px;color:#474747;font-weight:normal;width:616.5px;text-align:right;transform:scale(0.0910,0.1);">4,126.00</div>
<div class="t" style="left:458.60px;top:371.42px;font-size:67.0px;color:#474747;font-weight:normal;width:623.1px;text-align:right;transform:scale(0.0910,0.1);">6,236.00</div>
<div class="t" style="left:519.40px;top:371.42px;font-size:67.0px;color:#474747;font-weight:normal;width:619.8px;text-align:right;transform:scale(0.0910,0.1);">88.00%</div>
<div class="t" style="left:579.90px;top:371.42px;font-size:67.0px;color:#474747;font-weight:normal;width:594.7px;text-align:right;transform:scale(0.0950,0.1);">9,999,999,999.00</div>
<div class="t" style="left:674.90px;top:371.42px;font-size:67.0px;color:#474747;font-weight:normal;transform:scale(0.0910,0.1);">66</div>
<div class="ab" style="left:15.00px;top:420.04px;width:668.00px;height:0.80px;background:#eceef1"></div>
<div class="ab" style="left:39.05px;top:389.96px;width:0.70px;height:30.48px;background:#eff1f4"></div>
<div class="ab" style="left:159.45px;top:389.96px;width:0.70px;height:30.48px;background:#eff1f4"></div>
<div class="ab" style="left:240.05px;top:389.96px;width:0.70px;height:30.48px;background:#eff1f4"></div>
<div class="ab" style="left:276.65px;top:389.96px;width:0.70px;height:30.48px;background:#eff1f4"></div>
<div class="ab" style="left:337.25px;top:389.96px;width:0.70px;height:30.48px;background:#eff1f4"></div>
<div class="ab" style="left:398.05px;top:389.96px;width:0.70px;height:30.48px;background:#eff1f4"></div>
<div class="ab" style="left:458.25px;top:389.96px;width:0.70px;height:30.48px;background:#eff1f4"></div>
<div class="ab" style="left:519.05px;top:389.96px;width:0.70px;height:30.48px;background:#eff1f4"></div>
<div class="ab" style="left:579.55px;top:389.96px;width:0.70px;height:30.48px;background:#eff1f4"></div>
<div class="ab" style="left:640.15px;top:389.96px;width:0.70px;height:30.48px;background:#eff1f4"></div>
<div class="ab" style="left:23.20px;top:401.20px;width:7.80px;height:7.80px;background:#fff;border:0.7px solid #d9dce1;border-radius:1px"></div>
<div class="ab" style="left:43.80px;top:394.46px;width:40.10px;height:22.00px;background:#1f1d1c;border-radius:1.6px 1.6px 1px 1px"></div>
<div class="ab" style="left:46.10px;top:395.16px;width:23.00px;height:1.80px;background:#d6d6d6"></div>
<div class="ab" style="left:46.10px;top:398.76px;width:31.40px;height:1.30px;background:#8a8a8a"></div>
<div class="ab" style="left:46.10px;top:400.86px;width:1.40px;height:1.30px;background:#8a8a8a"></div>
<div class="ab" style="left:45.70px;top:404.86px;width:36.60px;height:5.00px;background:#fff"></div>
<div class="ab" style="left:51.60px;top:406.76px;width:23.30px;height:1.30px;background:#a0a0a0"></div>
<div class="ab" style="left:46.10px;top:411.96px;width:36.20px;height:4.50px;background:#fff"></div>
<div class="ab" style="left:59.30px;top:413.26px;width:8.50px;height:1.30px;background:#a0a0a0"></div>
<div class="t" style="left:87.90px;top:402.70px;font-size:64.0px;color:#2b2b2b;font-weight:normal;transform:scale(0.0940,0.1);-webkit-text-stroke:1.0px #2b2b2b;">奥尔滨水乳4</div>
<div class="t" style="left:164.00px;top:402.40px;font-size:65.0px;color:#474747;font-weight:normal;transform:scale(0.0900,0.1);">12312312312312312312​3...</div>
<div class="t" style="left:244.80px;top:402.90px;font-size:63.0px;color:#3f80f2;font-weight:normal;transform:scale(0.0940,0.1);">编辑</div>
<div class="t" style="left:261.00px;top:402.90px;font-size:63.0px;color:#3f80f2;font-weight:normal;transform:scale(0.0940,0.1);">删除</div>
<div class="t" style="left:281.40px;top:402.90px;font-size:62.0px;color:#2b2b2b;font-weight:normal;transform:scale(0.0990,0.1);-webkit-text-stroke:0.8px #2b2b2b;">互动类–投票磁贴</div>
<div class="ab" style="left:342.40px;top:403.80px;width:2.80px;height:2.80px;background:#dcdcdc;border-radius:50%"></div>
<div class="t" style="left:348.50px;top:402.80px;font-size:64.0px;color:#2b2b2b;font-weight:normal;transform:scale(0.0950,0.1);-webkit-text-stroke:0.8px #2b2b2b;">审核中</div>
<div class="t" style="left:398.40px;top:401.90px;font-size:67.0px;color:#474747;font-weight:normal;width:616.5px;text-align:right;transform:scale(0.0910,0.1);">4,126.00</div>
<div class="t" style="left:458.60px;top:401.90px;font-size:67.0px;color:#474747;font-weight:normal;width:623.1px;text-align:right;transform:scale(0.0910,0.1);">6,236.00</div>
<div class="t" style="left:519.40px;top:401.90px;font-size:67.0px;color:#474747;font-weight:normal;width:619.8px;text-align:right;transform:scale(0.0910,0.1);">88.00%</div>
<div class="t" style="left:579.90px;top:401.90px;font-size:67.0px;color:#474747;font-weight:normal;width:594.7px;text-align:right;transform:scale(0.0950,0.1);">9,999,999,999.00</div>
<div class="t" style="left:674.90px;top:401.90px;font-size:67.0px;color:#474747;font-weight:normal;transform:scale(0.0910,0.1);">66</div>
<div class="ab" style="left:15.00px;top:450.52px;width:668.00px;height:0.80px;background:#eceef1"></div>
<div class="ab" style="left:39.05px;top:420.44px;width:0.70px;height:30.48px;background:#eff1f4"></div>
<div class="ab" style="left:159.45px;top:420.44px;width:0.70px;height:30.48px;background:#eff1f4"></div>
<div class="ab" style="left:240.05px;top:420.44px;width:0.70px;height:30.48px;background:#eff1f4"></div>
<div class="ab" style="left:276.65px;top:420.44px;width:0.70px;height:30.48px;background:#eff1f4"></div>
<div class="ab" style="left:337.25px;top:420.44px;width:0.70px;height:30.48px;background:#eff1f4"></div>
<div class="ab" style="left:398.05px;top:420.44px;width:0.70px;height:30.48px;background:#eff1f4"></div>
<div class="ab" style="left:458.25px;top:420.44px;width:0.70px;height:30.48px;background:#eff1f4"></div>
<div class="ab" style="left:519.05px;top:420.44px;width:0.70px;height:30.48px;background:#eff1f4"></div>
<div class="ab" style="left:579.55px;top:420.44px;width:0.70px;height:30.48px;background:#eff1f4"></div>
<div class="ab" style="left:640.15px;top:420.44px;width:0.70px;height:30.48px;background:#eff1f4"></div>
<div class="ab" style="left:23.20px;top:431.68px;width:7.80px;height:7.80px;background:#fff;border:0.7px solid #d9dce1;border-radius:1px"></div>
<div class="ab" style="left:43.60px;top:424.94px;width:40.00px;height:22.00px;background:#1c1c1e;border-radius:1.6px"></div>
<div class="ab" style="left:45.90px;top:425.74px;width:21.70px;height:1.80px;background:#8f8f8f"></div>
<div class="ab" style="left:45.20px;top:430.24px;width:36.90px;height:12.60px;background:#d43c51"></div>
<div class="ab" style="left:72.00px;top:430.24px;width:0.50px;height:12.60px;background:#9a2a3a"></div>
<div class="ab" style="left:47.40px;top:432.14px;width:4.50px;height:4.80px;background:#f2f2f2;border-radius:50%"></div>
<div class="ab" style="left:53.20px;top:433.44px;width:13.90px;height:1.30px;background:#f0b8c0"></div>
<div class="ab" style="left:49.10px;top:437.94px;width:20.40px;height:1.30px;background:#e07686"></div>
<div class="ab" style="left:74.60px;top:435.34px;width:4.20px;height:2.00px;background:#f3cdd3"></div>
<div class="ab" style="left:58.30px;top:444.74px;width:13.30px;height:1.90px;background:#8a8a8a"></div>
<div class="t" style="left:87.90px;top:433.18px;font-size:64.0px;color:#2b2b2b;font-weight:normal;transform:scale(0.0940,0.1);-webkit-text-stroke:1.0px #2b2b2b;">防晒系列八折券2</div>
<div class="t" style="left:164.00px;top:432.88px;font-size:65.0px;color:#474747;font-weight:normal;transform:scale(0.0900,0.1);">12312312312312312312​3...</div>
<div class="t" style="left:244.80px;top:433.38px;font-size:63.0px;color:#3f80f2;font-weight:normal;transform:scale(0.0940,0.1);">编辑</div>
<div class="t" style="left:261.00px;top:433.38px;font-size:63.0px;color:#3f80f2;font-weight:normal;transform:scale(0.0940,0.1);">删除</div>
<div class="t" style="left:281.40px;top:433.38px;font-size:62.0px;color:#2b2b2b;font-weight:normal;transform:scale(0.0990,0.1);-webkit-text-stroke:0.8px #2b2b2b;">互动类–投票磁贴</div>
<div class="ab" style="left:342.40px;top:434.28px;width:2.80px;height:2.80px;background:#dcdcdc;border-radius:50%"></div>
<div class="t" style="left:348.50px;top:433.28px;font-size:64.0px;color:#2b2b2b;font-weight:normal;transform:scale(0.0950,0.1);-webkit-text-stroke:0.8px #2b2b2b;">审核中</div>
<div class="t" style="left:398.40px;top:432.38px;font-size:67.0px;color:#474747;font-weight:normal;width:616.5px;text-align:right;transform:scale(0.0910,0.1);">4,126.00</div>
<div class="t" style="left:458.60px;top:432.38px;font-size:67.0px;color:#474747;font-weight:normal;width:623.1px;text-align:right;transform:scale(0.0910,0.1);">6,236.00</div>
<div class="t" style="left:519.40px;top:432.38px;font-size:67.0px;color:#474747;font-weight:normal;width:619.8px;text-align:right;transform:scale(0.0910,0.1);">88.00%</div>
<div class="t" style="left:579.90px;top:432.38px;font-size:67.0px;color:#474747;font-weight:normal;width:594.7px;text-align:right;transform:scale(0.0950,0.1);">9,999,999,999.00</div>
<div class="t" style="left:674.90px;top:432.38px;font-size:67.0px;color:#474747;font-weight:normal;transform:scale(0.0910,0.1);">66</div>
<div class="ab" style="left:15.00px;top:481.00px;width:668.00px;height:0.80px;background:#eceef1"></div>
<div class="ab" style="left:39.05px;top:450.92px;width:0.70px;height:30.48px;background:#eff1f4"></div>
<div class="ab" style="left:159.45px;top:450.92px;width:0.70px;height:30.48px;background:#eff1f4"></div>
<div class="ab" style="left:240.05px;top:450.92px;width:0.70px;height:30.48px;background:#eff1f4"></div>
<div class="ab" style="left:276.65px;top:450.92px;width:0.70px;height:30.48px;background:#eff1f4"></div>
<div class="ab" style="left:337.25px;top:450.92px;width:0.70px;height:30.48px;background:#eff1f4"></div>
<div class="ab" style="left:398.05px;top:450.92px;width:0.70px;height:30.48px;background:#eff1f4"></div>
<div class="ab" style="left:458.25px;top:450.92px;width:0.70px;height:30.48px;background:#eff1f4"></div>
<div class="ab" style="left:519.05px;top:450.92px;width:0.70px;height:30.48px;background:#eff1f4"></div>
<div class="ab" style="left:579.55px;top:450.92px;width:0.70px;height:30.48px;background:#eff1f4"></div>
<div class="ab" style="left:640.15px;top:450.92px;width:0.70px;height:30.48px;background:#eff1f4"></div>
<div class="ab" style="left:23.20px;top:462.16px;width:7.80px;height:7.80px;background:#fff;border:0.7px solid #d9dce1;border-radius:1px"></div>
<div class="ab" style="left:43.80px;top:455.12px;width:39.80px;height:22.30px;background:#1d1d1f;border-radius:1.6px"></div>
<div class="ab" style="left:46.10px;top:456.12px;width:25.20px;height:1.60px;background:#c8c8c8"></div>
<div class="ab" style="left:45.40px;top:460.32px;width:36.90px;height:5.20px;background:#fff"></div>
<div class="ab" style="left:45.40px;top:460.32px;width:29.50px;height:5.20px;background:#62c9e5"></div>
<div class="ab" style="left:57.60px;top:462.32px;width:8.00px;height:1.20px;background:#3a6a78"></div>
<div class="ab" style="left:76.60px;top:462.42px;width:4.00px;height:1.00px;background:#ccc"></div>
<div class="ab" style="left:45.40px;top:466.62px;width:36.90px;height:5.70px;background:#fff"></div>
<div class="ab" style="left:45.40px;top:466.62px;width:7.50px;height:5.70px;background:#ececec"></div>
<div class="ab" style="left:57.60px;top:468.82px;width:8.00px;height:1.20px;background:#888"></div>
<div class="ab" style="left:76.60px;top:468.92px;width:4.00px;height:1.00px;background:#ccc"></div>
<div class="ab" style="left:53.50px;top:474.82px;width:20.10px;height:2.00px;background:#8a8a8a"></div>
<div class="t" style="left:87.90px;top:463.66px;font-size:64.0px;color:#2b2b2b;font-weight:normal;transform:scale(0.0940,0.1);-webkit-text-stroke:1.0px #2b2b2b;">奥尔滨水乳3</div>
<div class="t" style="left:164.00px;top:463.36px;font-size:65.0px;color:#474747;font-weight:normal;transform:scale(0.0900,0.1);">12312312312312312312​3...</div>
<div class="t" style="left:244.80px;top:463.86px;font-size:63.0px;color:#3f80f2;font-weight:normal;transform:scale(0.0940,0.1);">编辑</div>
<div class="t" style="left:261.00px;top:463.86px;font-size:63.0px;color:#3f80f2;font-weight:normal;transform:scale(0.0940,0.1);">删除</div>
<div class="t" style="left:281.40px;top:463.86px;font-size:62.0px;color:#2b2b2b;font-weight:normal;transform:scale(0.0990,0.1);-webkit-text-stroke:0.8px #2b2b2b;">互动类–投票磁贴</div>
<div class="ab" style="left:342.40px;top:464.76px;width:2.80px;height:2.80px;background:#dcdcdc;border-radius:50%"></div>
<div class="t" style="left:348.50px;top:463.76px;font-size:64.0px;color:#2b2b2b;font-weight:normal;transform:scale(0.0950,0.1);-webkit-text-stroke:0.8px #2b2b2b;">审核中</div>
<div class="t" style="left:398.40px;top:462.86px;font-size:67.0px;color:#474747;font-weight:normal;width:616.5px;text-align:right;transform:scale(0.0910,0.1);">4,126.00</div>
<div class="t" style="left:458.60px;top:462.86px;font-size:67.0px;color:#474747;font-weight:normal;width:623.1px;text-align:right;transform:scale(0.0910,0.1);">6,236.00</div>
<div class="t" style="left:519.40px;top:462.86px;font-size:67.0px;color:#474747;font-weight:normal;width:619.8px;text-align:right;transform:scale(0.0910,0.1);">88.00%</div>
<div class="t" style="left:579.90px;top:462.86px;font-size:67.0px;color:#474747;font-weight:normal;width:594.7px;text-align:right;transform:scale(0.0950,0.1);">9,999,999,999.00</div>
<div class="t" style="left:674.90px;top:462.86px;font-size:67.0px;color:#474747;font-weight:normal;transform:scale(0.0910,0.1);">66</div>
<div class="ab" style="left:683.00px;top:124.00px;width:8.00px;height:404.00px;background:#f7f8fa"></div>
<div class="ab" style="left:691.00px;top:12.00px;width:1.60px;height:516.00px;background:#e3e3e3"></div>
<div class="t" style="left:372.80px;top:493.20px;font-size:69.0px;color:#3a3a3a;font-weight:normal;">共321条记录</div>
<div class="ab" style="left:420.50px;top:490.30px;width:12.30px;height:12.90px;background:#f3f4f6;border-radius:1.5px"></div>
<svg style="left:0px;top:0px" width="695" height="528"><path d="M427.6 494.7 l-1.7 2 l1.7 2" fill="none" stroke="#c8c8c8" stroke-width="0.7"/></svg>
<div class="ab" style="left:437.20px;top:490.30px;width:12.70px;height:12.90px;background:#eaf2fe;border:0.8px solid #4b8af5;border-radius:1.5px"></div>
<div class="t" style="left:437.20px;top:493.80px;font-size:62.0px;color:#3d7ef5;font-weight:normal;width:127.0px;text-align:center;">1</div>
<div class="ab" style="left:454.30px;top:490.30px;width:12.70px;height:12.90px;background:#fff;border:0.7px solid #dfe1e5;border-radius:1.5px"></div>
<div class="t" style="left:454.30px;top:493.80px;font-size:62.0px;color:#333;font-weight:normal;width:127.0px;text-align:center;">2</div>
<div class="ab" style="left:470.90px;top:490.30px;width:12.70px;height:12.90px;background:#fff;border:0.7px solid #dfe1e5;border-radius:1.5px"></div>
<div class="t" style="left:470.90px;top:493.80px;font-size:62.0px;color:#333;font-weight:normal;width:127.0px;text-align:center;">3</div>
<div class="ab" style="left:488.00px;top:490.30px;width:12.70px;height:12.90px;background:#fff;border:0.7px solid #dfe1e5;border-radius:1.5px"></div>
<div class="t" style="left:488.00px;top:493.80px;font-size:62.0px;color:#333;font-weight:normal;width:127.0px;text-align:center;">4</div>
<div class="ab" style="left:504.90px;top:490.30px;width:12.70px;height:12.90px;background:#fff;border:0.7px solid #dfe1e5;border-radius:1.5px"></div>
<div class="t" style="left:504.90px;top:493.80px;font-size:62.0px;color:#333;font-weight:normal;width:127.0px;text-align:center;">5</div>
<div class="ab" style="left:531.60px;top:490.30px;width:17.10px;height:12.90px;background:#fff;border:0.7px solid #dfe1e5;border-radius:1.5px"></div>
<div class="t" style="left:531.60px;top:493.80px;font-size:62.0px;color:#333;font-weight:normal;width:171.0px;text-align:center;">100</div>
<div class="ab" style="left:522.20px;top:496.40px;width:0.90px;height:0.90px;background:#777;border-radius:50%"></div>
<div class="ab" style="left:524.40px;top:496.40px;width:0.90px;height:0.90px;background:#777;border-radius:50%"></div>
<div class="ab" style="left:526.60px;top:496.40px;width:0.90px;height:0.90px;background:#777;border-radius:50%"></div>
<div class="ab" style="left:553.60px;top:490.30px;width:12.50px;height:12.90px;background:#fff;border:0.7px solid #dfe1e5;border-radius:1.5px"></div>
<svg style="left:0px;top:0px" width="695" height="528"><path d="M559.1 494.7 l1.7 2 l-1.7 2" fill="none" stroke="#333" stroke-width="0.8"/></svg>
<div class="ab" style="left:572.20px;top:490.30px;width:44.50px;height:12.90px;background:#fff;border:0.7px solid #dfe1e5;border-radius:1.5px"></div>
<div class="t" style="left:578.20px;top:493.70px;font-size:63.0px;color:#333;font-weight:normal;">10条/页</div>
<svg style="left:0px;top:0px" width="695" height="528"><path d="M605.8 495.90000000000003 l1.6 1.6 l1.6 -1.6" fill="none" stroke="#333" stroke-width="0.8"/></svg>
<div class="ab" style="left:624.80px;top:490.30px;width:28.20px;height:12.90px;background:#fff;border:0.7px solid #dfe1e5;border-radius:1.5px"></div>
<div class="t" style="left:657.10px;top:493.70px;font-size:70.0px;color:#3f80f2;font-weight:normal;">跳转</div>
<div class="ab" style="left:693.20px;top:480.00px;width:1.20px;height:2.60px;background:#2f5fa8;border-radius:0.6px"></div>
<div class="ab" style="left:693.20px;top:485.90px;width:1.20px;height:1.20px;background:#2f5fa8;border-radius:50%"></div>
<div class="ab" style="left:693.20px;top:489.60px;width:1.20px;height:1.20px;background:#2f5fa8;border-radius:50%"></div>
<div class="ab" style="left:694.20px;top:490.00px;width:0.80px;height:1.60px;background:#c08030"></div>
</body></html>
